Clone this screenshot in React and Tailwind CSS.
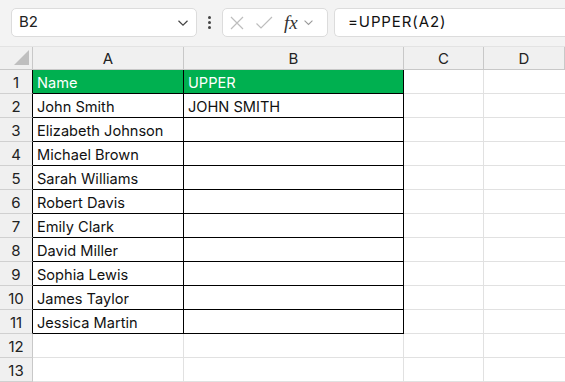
import React from 'react';

const names = [
  'John Smith',
  'Elizabeth Johnson',
  'Michael Brown',
  'Sarah Williams',
  'Robert Davis',
  'Emily Clark',
  'David Miller',
  'Sophia Lewis',
  'James Taylor',
  'Jessica Martin',
];

const Chevron = ({ className }) => (
  <svg viewBox="0 0 12 8" className={className} fill="none" stroke="currentColor" strokeWidth="1.2">
    <path d="M1.5 1.8 L6 6.2 L10.5 1.8" />
  </svg>
);

// --- formula bar across the top ---
const FormulaBar = () => (
  <div className="flex items-center h-[47px] bg-[#f3f3f3] border-b border-[#e3e3e3] pl-[11px] pb-[1px]">
    <div className="flex items-center justify-between w-[186px] h-[29px] bg-white border border-[#dcdcdc] rounded-[5px] pl-[7px] pr-[7px]">
      <span className="text-[15px] text-[#222]">B2</span>
      <Chevron className="w-[12px] h-[8px] text-[#444]" />
    </div>
    <div className="flex flex-col gap-[2px] mx-[11px]">
      <span className="w-[3px] h-[3px] bg-[#444] rounded-full" />
      <span className="w-[3px] h-[3px] bg-[#444] rounded-full" />
      <span className="w-[3px] h-[3px] bg-[#444] rounded-full" />
    </div>
    <div className="flex items-center w-[106px] h-[29px] bg-white border border-[#dcdcdc] rounded-[5px] pl-[6px]">
      <svg viewBox="0 0 16 16" className="w-[16px] h-[16px] text-[#bdbdbd]" fill="none" stroke="currentColor" strokeWidth="1.2">
        <path d="M2 2 L14 14 M14 2 L2 14" />
      </svg>
      <svg viewBox="0 0 18 16" className="w-[18px] h-[16px] ml-[10px] text-[#bdbdbd]" fill="none" stroke="currentColor" strokeWidth="1.2">
        <path d="M1.5 8.5 L6 13 L17 2" />
      </svg>
      <span className="ml-[11px] text-[19px] italic text-[#333] leading-none" style={{ fontFamily: '"Liberation Serif", serif' }}>
        fx
      </span>
      <Chevron className="w-[11px] h-[7px] ml-[5px] text-[#999]" />
    </div>
    <div className="flex items-center flex-1 h-[29px] ml-[6px] bg-white border border-[#dcdcdc] border-r-0 rounded-l-[5px] pl-[13px]">
      <span className="text-[15px] text-[#111] tracking-[0.9px]">=UPPER(A2)</span>
    </div>
  </div>
);

const colWidths = 'grid-cols-[33px_151px_220px_80px_1fr]';

export default function App() {
  const rows = [['Name', 'UPPER'], ...names.map((n, i) => [n, i === 0 ? 'JOHN SMITH' : '']), ['', ''], ['', '']];

  return (
    <div className="w-[565px] h-[382px] overflow-hidden bg-white" style={{ fontFamily: 'Inter, "Liberation Sans", sans-serif' }}>
      <FormulaBar />
      <div className={`grid ${colWidths} grid-rows-[23px] auto-rows-[24px] text-[14.6px] leading-[16px]`}>
        {/* header row */}
        <div className="relative bg-[#f0f0f0] border-r border-b border-[#c8c8c8]">
          <svg viewBox="0 0 16 16" className="absolute right-[3px] bottom-[4px] w-[15px] h-[15px]">
            <path d="M16 0 L16 16 L0 16 Z" fill="#bfbfbf" />
          </svg>
        </div>
        {['A', 'B', 'C', 'D'].map((c) => (
          <div key={c} className="flex items-center justify-center pt-[2px] bg-[#f0f0f0] border-r border-b border-[#c8c8c8] text-[15px] text-[#222]">
            {c}
          </div>
        ))}

        {rows.map((r, i) => {
          const inTable = i < 11;
          const isHead = i === 0;
          return (
            <React.Fragment key={i}>
              <div
                className={`flex items-end justify-center pb-[2px] bg-[#f0f0f0] border-b border-[#d0d0d0] text-[15px] text-[#222] border-r ${
                  inTable ? 'border-r-black' : 'border-r-[#c8c8c8]'
                }`}
              >
                {i + 1}
              </div>
              {r.map((v, j) => (
                <div
                  key={j}
                  className={`flex items-end pb-[2px] pl-[4px] border-r border-b whitespace-nowrap ${
                    isHead ? 'bg-[#00b050] text-white' : 'text-[#111]'
                  } ${inTable ? 'border-black' : 'border-[#e1e1e1]'}`}
                >
                  {v}
                </div>
              ))}
              <div className="border-r border-b border-[#e1e1e1]" />
              <div className="border-b border-[#e1e1e1]" />
            </React.Fragment>
          );
        })}
      </div>
    </div>
  );
}
